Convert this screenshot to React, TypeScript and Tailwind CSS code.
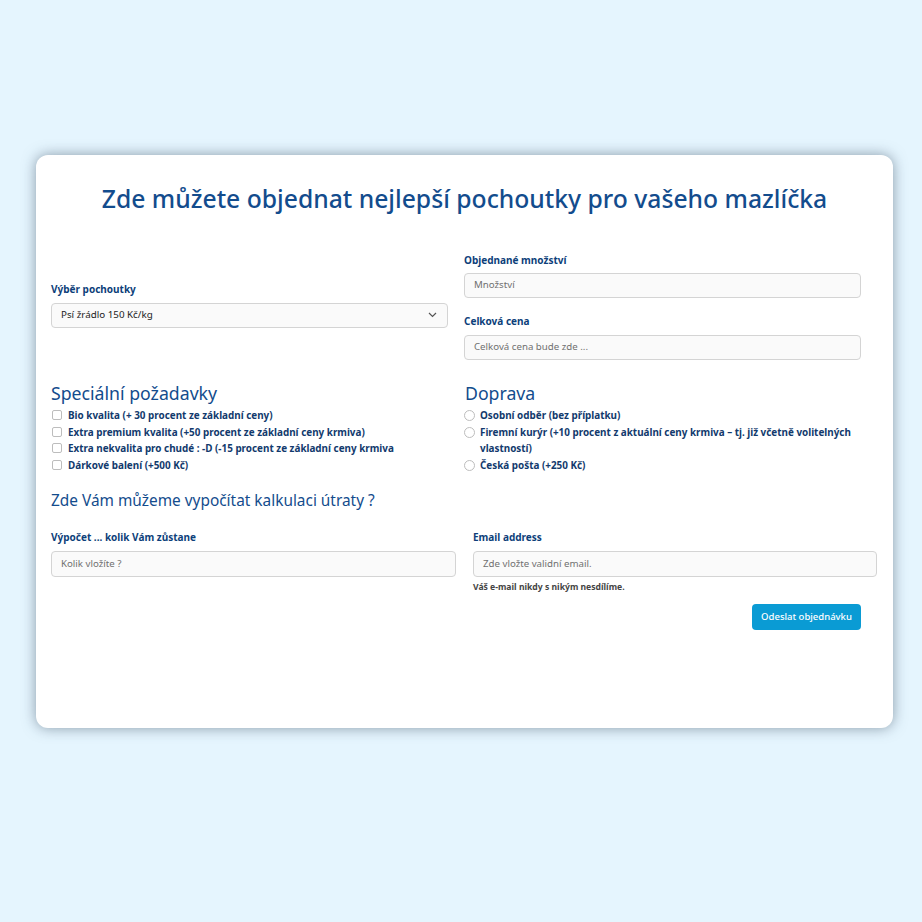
import React from "react";

const font = { fontFamily: '"Noto Sans", "Open Sans", sans-serif' };

function Label({ children }: { children: React.ReactNode }) {
  return <div className="text-[10px] leading-[14px] font-bold text-[#0d3f7a]">{children}</div>;
}

function Input({ placeholder, className = "" }: { placeholder: string; className?: string }) {
  return (
    <div className={`rounded-[4px] border border-[#d4d4d4] bg-[#fafafa] flex items-center px-[9px] text-[9.7px] text-[#707070] ${className}`}>
      {placeholder}
    </div>
  );
}

function Check({ children }: { children: React.ReactNode }) {
  return (
    <div className="flex items-start gap-[6px] text-[9.9px] leading-[16.7px] font-bold text-[#123a6d]">
      <span className="mt-[3px] w-[10px] h-[10px] shrink-0 rounded-[2px] border border-[#bdbdbd] bg-white ml-[1px]" />
      <span>{children}</span>
    </div>
  );
}

function Radio({ children }: { children: React.ReactNode }) {
  return (
    <div className="flex items-start gap-[5px] text-[9.9px] leading-[16.7px] font-bold text-[#123a6d]">
      <span className="mt-[3px] w-[11px] h-[11px] shrink-0 rounded-full border border-[#bdbdbd] bg-white" />
      <span>{children}</span>
    </div>
  );
}

export default function App() {
  return (
    <div className="min-h-[922px] bg-[#e5f5fe] pt-[155px] px-[36px]" style={font}>
      <div className="w-[857px] h-[573px] bg-white rounded-[12px] shadow-[0_0_14px_rgba(60,80,100,0.55)] px-[15px] pt-[26px]">
        <h1 className="text-center text-[24.7px] leading-[36px] font-medium text-[#134c8d]">
          Zde můžete objednat nejlepší pochoutky pro vašeho mazlíčka
        </h1>

        <div className="mt-[36px] w-[810px] grid grid-cols-2 gap-x-[16px] items-center">
          <div className="mb-[4px]">
            <Label>Výběr pochoutky</Label>
            <div className="mt-[7px] h-[25px] rounded-[4px] border border-[#d4d4d4] bg-[#fafafa] flex items-center justify-between px-[9px] text-[9.8px] text-[#222]">
              <span>Psí žrádlo 150 Kč/kg</span>
              <svg width="9" height="6" viewBox="0 0 9 6" className="mr-[1px]">
                <path d="M1 1l3.5 3.5L8 1" fill="none" stroke="#555" strokeWidth="1.2" />
              </svg>
            </div>
          </div>
          <div>
            <Label>Objednané množství</Label>
            <Input placeholder="Množství" className="mt-[6px] h-[25px]" />
            <div className="mt-[16px]">
              <Label>Celková cena</Label>
            </div>
            <Input placeholder="Celková cena bude zde ..." className="mt-[7px] h-[25px]" />
          </div>
        </div>

        <div className="mt-[21px] w-[810px] grid grid-cols-2 gap-x-[16px]">
          <div>
            <h2 className="text-[17.7px] leading-[24px] text-[#134c8d]">Speciální požadavky</h2>
            <div className="mt-[2px]">
              <Check>Bio kvalita (+ 30 procent ze základní ceny)</Check>
              <Check>Extra premium kvalita (+50 procent ze základní ceny krmiva)</Check>
              <Check>Extra nekvalita pro chudé : -D (-15 procent ze základní ceny krmiva</Check>
              <Check>Dárkové balení (+500 Kč)</Check>
            </div>
          </div>
          <div>
            <h2 className="text-[17.7px] leading-[24px] text-[#134c8d] ml-[1px]">Doprava</h2>
            <div className="mt-[2px]">
              <Radio>Osobní odběr (bez příplatku)</Radio>
              <Radio>Firemní kurýr (+10 procent z aktuální ceny krmiva – tj. již včetně volitelných vlastností)</Radio>
              <Radio>Česká pošta (+250 Kč)</Radio>
            </div>
          </div>
        </div>

        <h3 className="mt-[15px] text-[15.4px] leading-[24px] text-[#134c8d]">Zde Vám můžeme vypočítat kalkulaci útraty ?</h3>

        <div className="mt-[17px] w-[826px] grid grid-cols-2 gap-x-[16px]">
          <div>
            <Label>Výpočet ... kolik Vám zůstane</Label>
            <Input placeholder="Kolik vložíte ?" className="mt-[7px] h-[26px]" />
          </div>
          <div className="ml-[1px]">
            <Label>Email address</Label>
            <Input placeholder="Zde vložte validní email." className="mt-[7px] h-[26px]" />
            <div className="mt-[3px] text-[8.6px] leading-[14px] font-bold text-[#444]">Váš e-mail nikdy s nikým nesdílíme.</div>
          </div>
        </div>

        <div className="w-[810px] flex justify-end mt-[10px]">
          <button className="h-[26px] w-[109px] rounded-[4px] bg-[#0a9bd4] text-white text-[9.5px] font-medium">
            Odeslat objednávku
          </button>
        </div>
      </div>
    </div>
  );
}
